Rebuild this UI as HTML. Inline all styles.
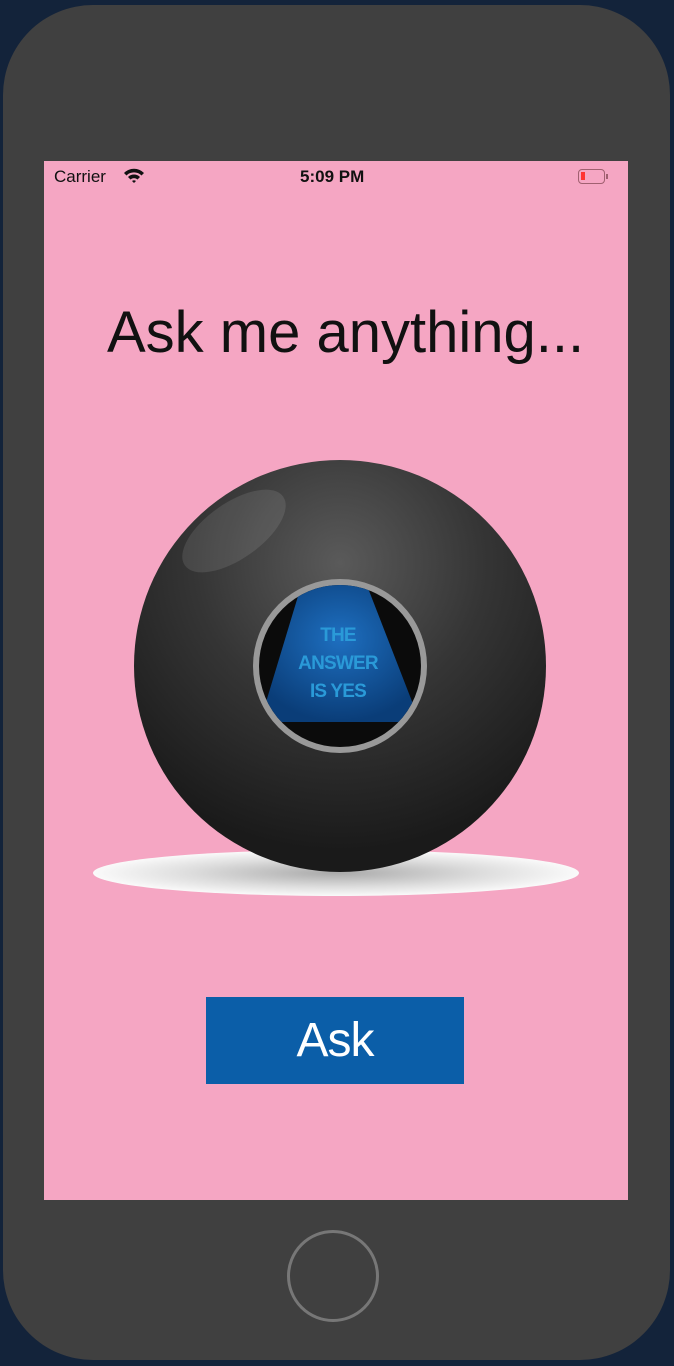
<!DOCTYPE html>
<html><head><style>
body{margin:0;width:674px;height:1366px;background:#13233a;position:relative;overflow:hidden;font-family:"Liberation Sans",sans-serif}
.phone{position:absolute;left:3px;top:5px;width:667px;height:1355px;background:#404040;border-radius:90px}
.screen{position:absolute;left:44px;top:161px;width:584px;height:1039px;background:#f5a6c3;overflow:hidden}
.t{position:absolute;font-size:17px;color:#111;top:6px}
.home{position:absolute;left:287px;top:1230px;width:92px;height:92px;border:3px solid #777;border-radius:50%;box-sizing:border-box}
</style></head><body>
<div class="phone"></div>
<div class="screen">
<div class="t" style="left:10px">Carrier</div>
<svg style="position:absolute;left:79px;top:7px" width="22" height="16" viewBox="0 0 22 16"><path d="M1 5 A14 14 0 0 1 21 5 L18.5 7.5 A10.5 10.5 0 0 0 3.5 7.5Z M5 9 A8.5 8.5 0 0 1 17 9 L14.5 11.5 A5 5 0 0 0 7.5 11.5Z M9 13 A3 3 0 0 1 13 13 L11 15Z" fill="#111"/></svg>
<div class="t" style="left:256px;font-weight:bold">5:09 PM</div>
<div style="position:absolute;left:534px;top:8px;width:27px;height:15px;border:1.5px solid #a06070;border-radius:4px;box-sizing:border-box"><div style="position:absolute;left:2px;top:2px;width:4px;height:8px;background:#f33"></div></div>
<div style="position:absolute;left:562px;top:13px;width:2px;height:5px;background:#a06070"></div>
<div style="position:absolute;left:63px;top:138px;font-size:58px;color:#111;letter-spacing:0px;white-space:nowrap">Ask me anything...</div>
<svg style="position:absolute;left:0;top:0" width="584" height="1039">
<defs>
<radialGradient id="sh" cx="50%" cy="50%" r="50%"><stop offset="0" stop-color="#aaa"/><stop offset="0.6" stop-color="#ddd"/><stop offset="1" stop-color="#fafafa"/></radialGradient>
<radialGradient id="b" cx="50%" cy="25%" r="70%"><stop offset="0" stop-color="#5a5a5a"/><stop offset="0.5" stop-color="#353535"/><stop offset="1" stop-color="#1a1a1a"/></radialGradient>
<radialGradient id="w" cx="50%" cy="40%" r="60%"><stop offset="0" stop-color="#1e6fc0"/><stop offset="1" stop-color="#0a3d78"/></radialGradient>
<clipPath id="c"><circle cx="296" cy="505" r="81"/></clipPath>
</defs>
<ellipse cx="292" cy="712" rx="243" ry="23" fill="url(#sh)"/>
<circle cx="296" cy="505" r="206" fill="url(#b)"/>
<ellipse cx="190" cy="370" rx="60" ry="28" transform="rotate(-35 190 370)" fill="#fff" opacity="0.1"/>
<circle cx="296" cy="505" r="87" fill="#999"/>
<circle cx="296" cy="505" r="81" fill="#0b0b0b"/>
<path clip-path="url(#c)" d="M258 422 L322 422 L376 561 L216 561Z" fill="url(#w)"/>
<g font-family="Liberation Sans,sans-serif" font-weight="bold" font-size="19" fill="#2a9ad8" text-anchor="middle" letter-spacing="-0.8">
<text x="294" y="480">THE</text><text x="294" y="508">ANSWER</text><text x="294" y="536">IS YES</text></g>
</svg>
<div style="position:absolute;left:162px;top:836px;width:258px;height:87px;background:#0b5ea8;color:#fff;font-size:48px;text-align:center;line-height:87px;letter-spacing:-1px">Ask</div>
</div>
<div class="home"></div>
</body></html>
